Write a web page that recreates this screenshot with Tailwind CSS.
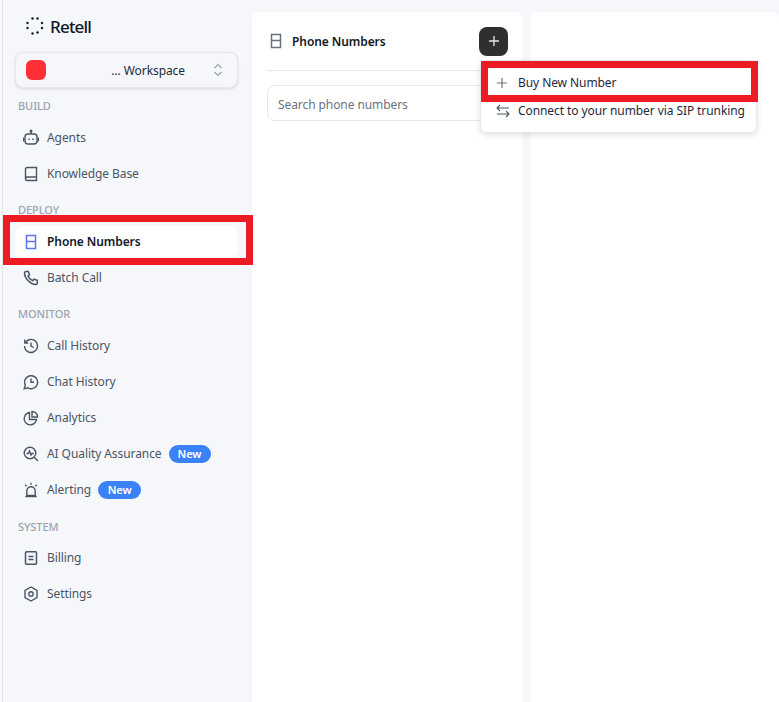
<!DOCTYPE html>
<html>
<head>
<meta charset="utf-8">
<script src="https://cdn.jsdelivr.net/npm/@tailwindcss/browser@4"></script>
</head>
<body class="font-['Noto_Sans',sans-serif] bg-[#f5f7fb] text-[12px] tracking-[-0.08px] overflow-hidden">
<div class="relative flex h-[702px] w-[779px] overflow-hidden bg-[#f5f7fb]">
  <div class="w-[3px] shrink-0 bg-[#fafafa] border-r border-[#e5e7eb]"></div>
  <aside class="w-[249px] shrink-0 pl-[12px] pr-[14px]">
    <div class="flex h-[52px] items-center gap-[6px] pt-[2px] pl-[10px]">
      <svg width="20" height="20" viewBox="0 0 20 20" fill="#111827"><circle cx="7.500" cy="1.500" r="1.200"/><circle cx="12.500" cy="1.500" r="1.200"/><circle cx="17" cy="6" r="1.200"/><circle cx="17" cy="11" r="1.200"/><circle cx="12.500" cy="15.500" r="1.200"/><circle cx="7.500" cy="16.500" r="1.200"/><circle cx="2.500" cy="11" r="1.200"/><circle cx="2.500" cy="6" r="1.200"/></svg>
      <span class="-ml-[1px] text-[17px] font-medium tracking-[-0.8px] text-[#111827]">Retell</span>
    </div>
    <div class="flex h-[36px] items-center rounded-[8px] border border-[#e5e7eb] bg-[#f5f7fb] pl-[10px] pr-[14px] shadow-[0_1px_3px_rgba(0,0,0,0.12)]">
      <div class="h-[20px] w-[20px] rounded-[6px] bg-[#ff2f36]"></div>
      <span class="ml-auto mr-[28px] pt-[2px] text-[#1f2937]">... Workspace</span>
      <svg width="10" height="14" viewBox="0 0 10 14" fill="none" stroke="#9ca3af" stroke-width="1.200"><path d="M1.500 5 5 1.500 8.500 5M1.500 9 5 12.500 8.500 9"/></svg>
    </div>
    <div class="mt-[11px] h-[14px] pl-[3px] text-[11px] font-medium leading-[14px] text-[#9ca3af]">BUILD</div>
    <nav class="mt-[7px]">
      <a class="flex h-[36px] items-center gap-[8px] pl-[8px] text-[#4b5563]"><svg class="shrink-0" width="16" height="18" viewBox="0 0 16 18" fill="none" stroke="#4b5563" stroke-width="1.400"><rect x="2" y="5" width="12" height="10" rx="3"/><path d="M8 5V2.500M.7 8.500v4M15.300 8.500v4M6 9.500v1.500M10 9.500v1.500"/><circle cx="8" cy="2" r=".8"/></svg>Agents</a>
      <a class="flex h-[36px] items-center gap-[8px] pl-[8px] text-[#4b5563]"><svg class="shrink-0" width="16" height="16" viewBox="0 0 16 16" fill="none" stroke="#4b5563" stroke-width="1.400"><path d="M2.500 13V3a1.500 1.500 0 0 1 1.500-1.500h9.500v13H4A1.500 1.500 0 0 1 2.500 13Zm0 0A1.800 1.800 0 0 1 4.300 11h9.200"/></svg>Knowledge Base</a>
    </nav>
    <div class="mt-[11px] h-[14px] pl-[3px] text-[11px] font-medium leading-[14px] text-[#9ca3af]">DEPLOY</div>
    <nav class="mt-[9px]">
      <a class="my-[2px] flex h-[32px] items-center gap-[8px] rounded-[8px] bg-white pl-[8px] font-semibold text-[#111827]"><svg class="shrink-0" width="16" height="16" viewBox="0 0 16 16" fill="none" stroke="#5b74e8" stroke-width="1.500"><rect x="3.500" y="1.500" width="9" height="13"/><path d="M3.500 7.500h9"/></svg>Phone Numbers</a>
      <a class="flex h-[36px] items-center gap-[8px] pl-[8px] text-[#4b5563]"><svg class="shrink-0" width="16" height="16" viewBox="0 0 16 16" fill="none" stroke="#4b5563" stroke-width="1.500"><path d="M3 1.500h2.300l1.200 3.200-1.500 1.300a8 8 0 0 0 4.700 4.700l1.300-1.500 3.300 1.200V13a1.500 1.500 0 0 1-1.500 1.500C7.500 14.500 1.500 8.500 1.500 3A1.500 1.500 0 0 1 3 1.500Z"/></svg>Batch Call</a>
    </nav>
    <div class="mt-[11px] h-[14px] pl-[3px] text-[11px] font-medium leading-[14px] text-[#9ca3af]">MONITOR</div>
    <nav class="mt-[7px]">
      <a class="flex h-[36px] items-center gap-[8px] pl-[8px] text-[#4b5563]"><svg class="shrink-0" width="16" height="16" viewBox="0 0 16 16" fill="none" stroke="#4b5563" stroke-width="1.400"><path d="M1.800 1.500v3.500h3.500M2.200 5A6.500 6.500 0 1 1 1.500 8M8 4.500v3.700l2.500 1.500"/></svg>Call History</a>
      <a class="flex h-[36px] items-center gap-[8px] pl-[8px] text-[#4b5563]"><svg class="shrink-0" width="16" height="16" viewBox="0 0 16 16" fill="none" stroke="#4b5563" stroke-width="1.400"><path d="M1.200 14.800l1.100-3.700a6.500 6.500 0 1 1 2.500 2.700L1.200 14.800ZM8 4.500v3.700h3"/></svg>Chat History</a>
      <a class="flex h-[36px] items-center gap-[8px] pl-[8px] text-[#4b5563]"><svg class="shrink-0" width="16" height="16" viewBox="0 0 16 16" fill="none" stroke="#4b5563" stroke-width="1.400"><path d="M6.500 2.500A6.200 6.200 0 1 0 13.500 9.500H6.500V2.500ZM9 1.500a5.500 5.500 0 0 1 5.500 5.500H9V1.500Z"/></svg>Analytics</a>
      <a class="flex h-[36px] items-center gap-[8px] pl-[8px] text-[#4b5563]"><svg class="shrink-0" width="16" height="16" viewBox="0 0 16 16" fill="none" stroke="#4b5563" stroke-width="1.400"><circle cx="7" cy="7" r="5.800"/><path d="M11.200 11.200l3.800 3.800M3.500 7.500h1.800l1.200-2.500 1.500 4 1-1.500h1.800"/></svg>AI Quality Assurance<span class="-ml-[1px] flex h-[18px] w-[42px] items-center justify-center rounded-full bg-[#3b82f6] text-[11px] font-semibold text-white">New</span></a>
      <a class="flex h-[36px] items-center gap-[8px] pl-[8px] text-[#4b5563]"><svg class="shrink-0" width="16" height="16" viewBox="0 0 16 16" fill="none" stroke="#4b5563" stroke-width="1.400"><path d="M3.800 13.500V9a4.200 4.200 0 0 1 8.400 0v4.500ZM2.300 14.500h11.400M8 .8v2M2.200 2.800 3.700 4.300M13.800 2.800 12.300 4.300"/></svg>Alerting<span class="-ml-[1px] flex h-[18px] w-[43px] items-center justify-center rounded-full bg-[#3b82f6] text-[11px] font-semibold text-white">New</span></a>
    </nav>
    <div class="mt-[12px] h-[14px] pl-[3px] text-[11px] font-medium leading-[14px] text-[#9ca3af]">SYSTEM</div>
    <nav class="mt-[6px]">
      <a class="flex h-[36px] items-center gap-[8px] pl-[8px] text-[#4b5563]"><svg class="shrink-0" width="16" height="16" viewBox="0 0 16 16" fill="none" stroke="#4b5563" stroke-width="1.500"><rect x="2.500" y="1.800" width="11" height="12.400" rx="1"/><path d="M5.500 6.500h5M5.500 9.500h5"/></svg>Billing</a>
      <a class="flex h-[36px] items-center gap-[8px] pl-[8px] text-[#4b5563]"><svg class="shrink-0" width="16" height="16" viewBox="0 0 16 16" fill="none" stroke="#4b5563" stroke-width="1.400"><path d="M8 1 14 4.500v7L8 15 2 11.500v-7L8 1Z"/><circle cx="8" cy="8" r="2.200"/></svg>Settings</a>
    </nav>
  </aside>
  <div class="mt-[12px] flex w-[270px] shrink-0 flex-col rounded-t-[6px] bg-white px-[15px]">
    <div class="flex h-[59px] items-center border-b border-[#e5e7eb]">
      <svg width="16" height="16" viewBox="0 0 16 16" fill="none" stroke="#6b7280" stroke-width="1.500" class="ml-[1px] shrink-0"><rect x="3.500" y="1.500" width="9" height="13"/><path d="M3.500 7.500h9"/></svg>
      <span class="ml-[8px] pt-[2px] font-semibold text-[#111827]">Phone Numbers</span>
      <button class="ml-auto mr-[-1px] flex h-[29px] w-[29px] items-center justify-center rounded-[8px] bg-[#2f2f2f]">
        <svg width="12" height="12" viewBox="0 0 12 12" stroke="#e5e7eb" stroke-width="1.300"><path d="M6 1v10M1 6h10"/></svg>
      </button>
    </div>
    <div class="mt-[14px] flex h-[36px] items-center rounded-[8px] border border-[#e5e7eb] px-[10px] pt-[4px] text-[#6b7280]">Search phone numbers</div>
  </div>
  <div class="mt-[12px] ml-[8px] flex-1 rounded-t-[6px] bg-white"></div>

  <div class="absolute left-[480px] top-[60px] h-[73px] w-[277px] rounded-[6px] border border-[#e5e7eb] bg-white pl-[15px] shadow-[0_2px_6px_rgba(0,0,0,0.12)]">
    <div class="flex h-[36px] items-center gap-[11px] whitespace-nowrap pt-[8px] text-[#1f2937]"><svg width="10" height="10" viewBox="0 0 10 10" stroke="#6b7280" stroke-width="1.200" class="ml-[1px]"><path d="M5 0v10M0 5h10"/></svg>Buy New Number</div>
    <div class="flex h-[28px] items-center gap-[8px] whitespace-nowrap text-[#1f2937]"><svg width="14" height="14" viewBox="0 0 14 14" fill="none" stroke="#4b5563" stroke-width="1.100"><path d="M1 4h12M4 1 1 4l3 3M13 10H1M10 7l3 3-3 3"/></svg>Connect to your number via SIP trunking</div>
  </div>

  <div class="pointer-events-none absolute left-[3px] top-[215px] h-[50px] w-[250px] border-[7px] border-[#ed1c24]"></div>
  <div class="pointer-events-none absolute left-[481px] top-[61px] h-[41px] w-[277px] border-[7px] border-[#ed1c24]"></div>
</div>
</body>
</html>
